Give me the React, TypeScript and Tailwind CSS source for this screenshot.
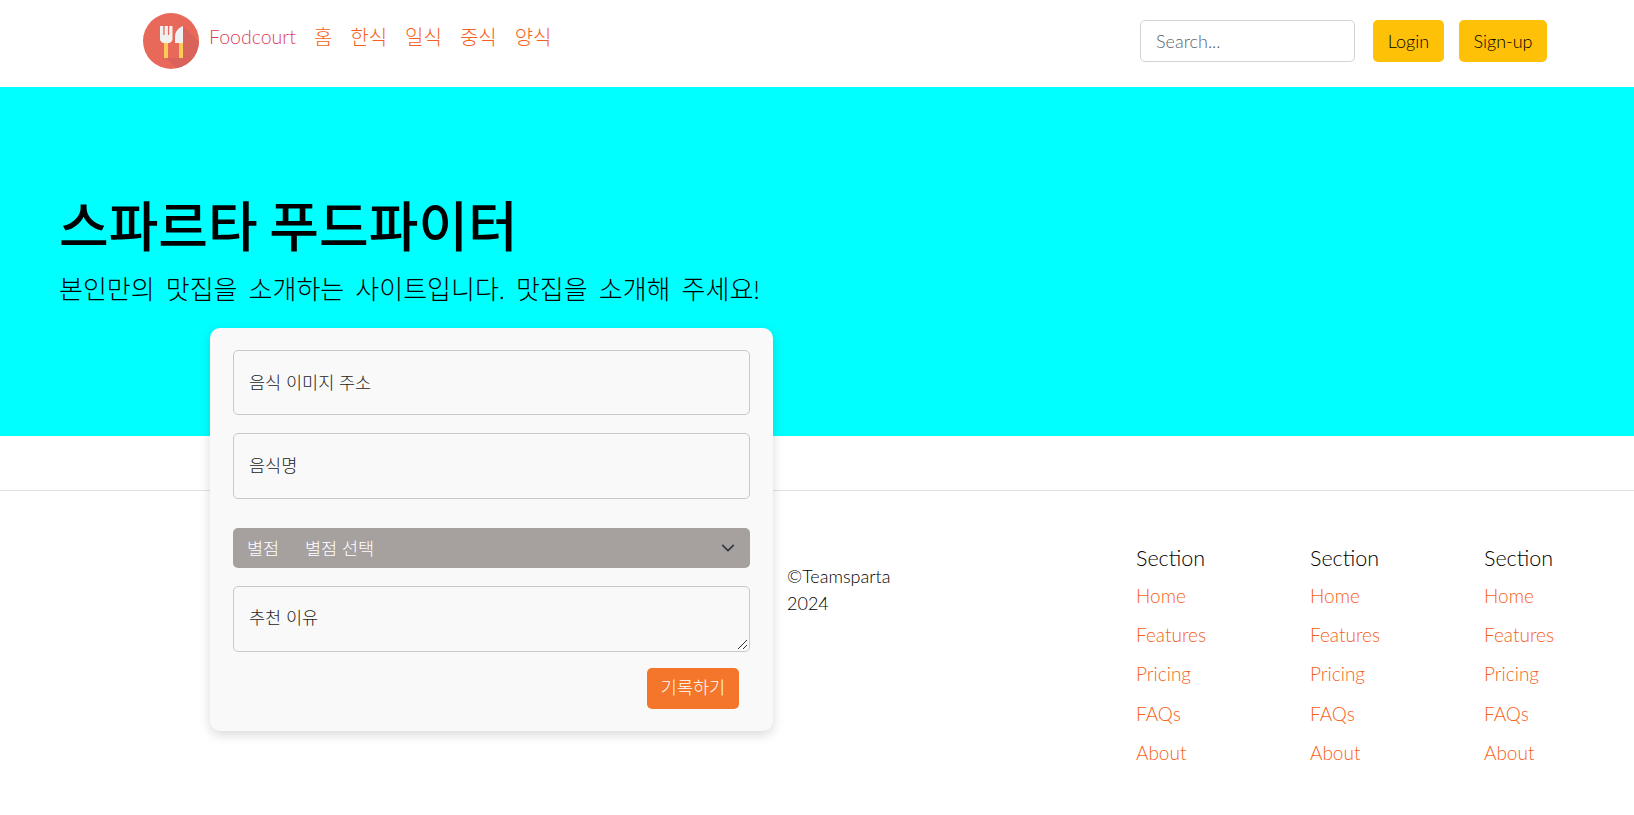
const FONT = "font-['Lato','Noto_Sans_CJK_KR',sans-serif]"

const MENU = ['홈', '한식', '일식', '중식', '양식']
const LINKS = ['Home', 'Features', 'Pricing', 'FAQs', 'About']

function Logo() {
  return (
    <svg width="56" height="56" viewBox="0 0 56 56" className="shrink-0 -mt-[5px]">
      <defs>
        <clipPath id="logo-clip">
          <circle cx="28" cy="28" r="28" />
        </clipPath>
      </defs>
      <circle cx="28" cy="28" r="28" fill="#e8695a" />
      <path d="M40 13 62 35V62H40L23 45H40Z" fill="#d9635a" clipPath="url(#logo-clip)" />
      <path d="M17 13h3.300v9h1.300v-9h3.300v9h1.300v-9h3.300v13c0 2-1.500 3.500-3.500 4h-5.500c-2-.5-3.500-2-3.500-4z" fill="#f1f1f1" />
      <rect x="21" y="30" width="4" height="15" fill="#fdc959" />
      <path d="M32 30V23c0-4 3.500-8.500 8-10v17z" fill="#eef0f2" />
      <rect x="36" y="30" width="4" height="15" fill="#fdc959" />
    </svg>
  )
}

function FooterColumn() {
  return (
    <div>
      <h5 className="text-[21.500px] leading-[24px] font-light text-black mb-[12px]">Section</h5>
      <ul className="flex flex-col">
        {LINKS.map((l) => (
          <li key={l} className="h-[39.200px] leading-[27px] text-[19px] font-light text-[#f75f20]">
            {l}
          </li>
        ))}
      </ul>
    </div>
  )
}

export default function App() {
  return (
    <div className={`${FONT} relative min-h-[815px] bg-white text-black overflow-hidden`}>
      {/* 상단 메뉴 */}
      <nav className="h-[87px] pl-[143px] pr-[87px] flex items-center justify-between">
        <div className="flex items-center">
          <Logo />
          <div className="flex items-center gap-[18px] ml-[10px] -mt-[14px] text-[20px] font-light">
            <span className="text-[19.500px] text-[#dc3f58]">Foodcourt</span>
            {MENU.map((m) => (
              <span key={m} className="text-[#f75f20]">{m}</span>
            ))}
          </div>
        </div>
        <div className="flex items-center -mt-[5px]">
          <div className="w-[215px] h-[42px] border border-[#ced4da] rounded-[5px] px-[15px] flex items-center text-[18px] font-light text-[#5c656d] mr-[18px]">
            Search...
          </div>
          <button className="h-[42px] w-[71px] rounded-[5px] bg-[#ffc107] text-[18px] font-light text-black mr-[15px]">Login</button>
          <button className="h-[42px] w-[88px] rounded-[5px] bg-[#ffc107] text-[18px] font-light text-black">Sign-up</button>
        </div>
      </nav>

      {/* 히어로 */}
      <section className="h-[349px] bg-[#00ffff] pl-[59px] pt-[106px]">
        <h1 className="text-[54px] leading-[67px] font-medium [word-spacing:-2px]">스파르타 푸드파이터</h1>
        <p className="text-[26px] leading-[36px] mt-[11px] font-light [word-spacing:4px]">본인만의 맛집을 소개하는 사이트입니다. 맛집을 소개해 주세요!</p>
      </section>

      {/* 기록 카드 */}
      <div className="absolute left-[210px] top-[328px] w-[563px] h-[403px] rounded-[10px] bg-[#f9f9f9] shadow-[0_4px_12px_rgba(0,0,0,0.15)] px-[23px] pt-[22px]">
        <div className="h-[65px] border border-[#c9c9c9] rounded-[5px] px-[15px] pt-[2px] flex items-center text-[17.500px] font-light text-[#222]">음식 이미지 주소</div>
        <div className="h-[66px] mt-[18px] border border-[#c9c9c9] rounded-[5px] px-[15px] flex items-center text-[17.500px] font-light text-[#222]">음식명</div>
        <div className="h-[40px] mt-[29px] rounded-[5px] bg-[#a6a09f] pl-[14px] pr-[14px] flex items-center text-[17.500px] font-light text-white">
          <span className="w-[58px] mt-[2px]">별점</span>
          <span className="mt-[2px]">별점 선택</span>
          <svg width="14" height="14" viewBox="0 0 16 16" className="ml-auto mr-[1px]" fill="none" stroke="#343a40" strokeWidth="2" strokeLinecap="round" strokeLinejoin="round">
            <path d="m2 5 6 6 6-6" />
          </svg>
        </div>
        <div className="relative h-[66px] mt-[18px] border border-[#c9c9c9] rounded-[5px] px-[15px] pt-[18px] text-[17.500px] font-light text-[#222]">
          추천 이유
          <svg width="12" height="12" viewBox="0 0 12 12" className="absolute right-[1px] bottom-[1px]" stroke="#333" strokeWidth="1">
            <path d="M11 2 2 11M11 7l-4 4" />
          </svg>
        </div>
        <div className="flex justify-end mt-[16px] pr-[11px]">
          <button className="w-[92px] h-[41px] rounded-[5px] bg-[#f4762b] text-white text-[17.500px] font-light">기록하기</button>
        </div>
      </div>

      {/* 푸터 */}
      <footer className="mt-[54px] border-t border-[#dee2e6] pt-[55px] pl-[788px] grid grid-cols-[348px_174px_174px_150px] text-[18px] font-light">
        <div className="pt-[17px] -ml-[1px] w-[120px] leading-[27px] text-black">©Teamsparta 2024</div>
        <FooterColumn />
        <FooterColumn />
        <FooterColumn />
      </footer>
    </div>
  )
}
